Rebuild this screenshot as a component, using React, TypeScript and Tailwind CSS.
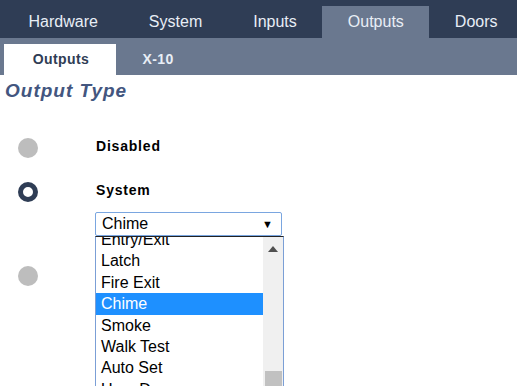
import React from 'react';

const tabs = ['Hardware', 'System', 'Inputs', 'Outputs', 'Doors'];
const options = ['Entry/Exit', 'Latch', 'Fire Exit', 'Chime', 'Smoke', 'Walk Test', 'Auto Set', 'User Duress'];

function Radio({ checked }: { checked?: boolean }) {
  return checked ? (
    <span className="block w-5 h-5 rounded-full border-[5px] border-[#2f3d55] bg-white" />
  ) : (
    <span className="block w-5 h-5 rounded-full bg-[#bdbdbd]" />
  );
}

export default function App() {
  return (
    <div className="w-[517px] h-[386px] overflow-hidden bg-white font-['Liberation_Sans',Arial,sans-serif]">
      {/* main tabs */}
      <div className="h-[38px] bg-[#2f3d55] flex items-end pl-[3px]">
        {tabs.map(t => (
          <div
            key={t}
            className={
              'h-[32px] px-[25.5px] flex items-center justify-center text-[16px] text-[#e8eef6] pb-[1px] whitespace-nowrap ' +
              (t === 'Outputs' ? 'bg-[#6a788f]' : '')
            }
          >
            {t}
          </div>
        ))}
      </div>

      {/* sub tabs */}
      <div className="h-[37px] bg-[#6a788f] flex items-end pl-[4px]">
        <div className="h-[31px] w-[112px] bg-white flex items-center justify-center text-[14px] font-bold text-[#2f3d55] tracking-[0.4px] pl-[2px]">
          Outputs
        </div>
        <div className="h-[31px] w-[84px] flex items-center justify-center text-[14px] font-bold text-[#e8eef6] tracking-[0.4px]">
          X-10
        </div>
      </div>

      <div className="pl-[5px] pt-[5px] text-[19px] font-bold italic text-[#43567f] tracking-[1px] leading-[22px]">
        Output Type
      </div>

      <div className="relative">
        <div className="flex items-center h-[20px] mt-[36px]">
          <div className="w-[18px]" />
          <Radio />
          <div className="ml-[58px] text-[14px] font-bold text-black tracking-[0.8px] -mt-[4px]">Disabled</div>
        </div>

        <div className="flex items-center h-[20px] mt-[24px]">
          <div className="w-[18px]" />
          <Radio checked />
          <div className="ml-[58px] text-[14px] font-bold text-black tracking-[0.8px] -mt-[3px]">System</div>
        </div>

        <div className="flex items-center h-[20px] mt-[64px]">
          <div className="w-[18px]" />
          <Radio />
        </div>

        {/* select with open list */}
        <div className="absolute left-[95px] top-[74px] w-[189px]">
          <div className="h-[24px] w-[187px] border border-[#7aa6e0] rounded-[2px] flex items-center pl-[6px] pr-[8px] text-[16px] text-black bg-white">
            <span className="flex-1">Chime</span>
            <span className="text-[11px] leading-none">▼</span>
          </div>
          <div className="h-[160px] border border-[#7b9fd6] border-t-[#222] overflow-hidden flex bg-white">
            <div className="flex-1 -mt-[8px]">
              {options.map(o => (
                <div
                  key={o}
                  className={
                    'h-[21.4px] leading-[21.4px] pl-[5px] text-[16px] whitespace-nowrap ' +
                    (o === 'Chime' ? 'bg-[#1e90ff] text-white' : 'text-black')
                  }
                >
                  {o}
                </div>
              ))}
            </div>
            <div className="w-[20px] bg-[#f0f0f0] flex flex-col items-center">
              <svg width="10" height="6" viewBox="0 0 10 6" className="mt-[9px]">
                <path d="M0 6 L5 0 L10 6 Z" fill="#505050" />
              </svg>
              <div className="w-[17px] h-[20px] bg-[#c1c1c1] mt-[119px]" />
            </div>
          </div>
        </div>
      </div>
    </div>
  );
}
